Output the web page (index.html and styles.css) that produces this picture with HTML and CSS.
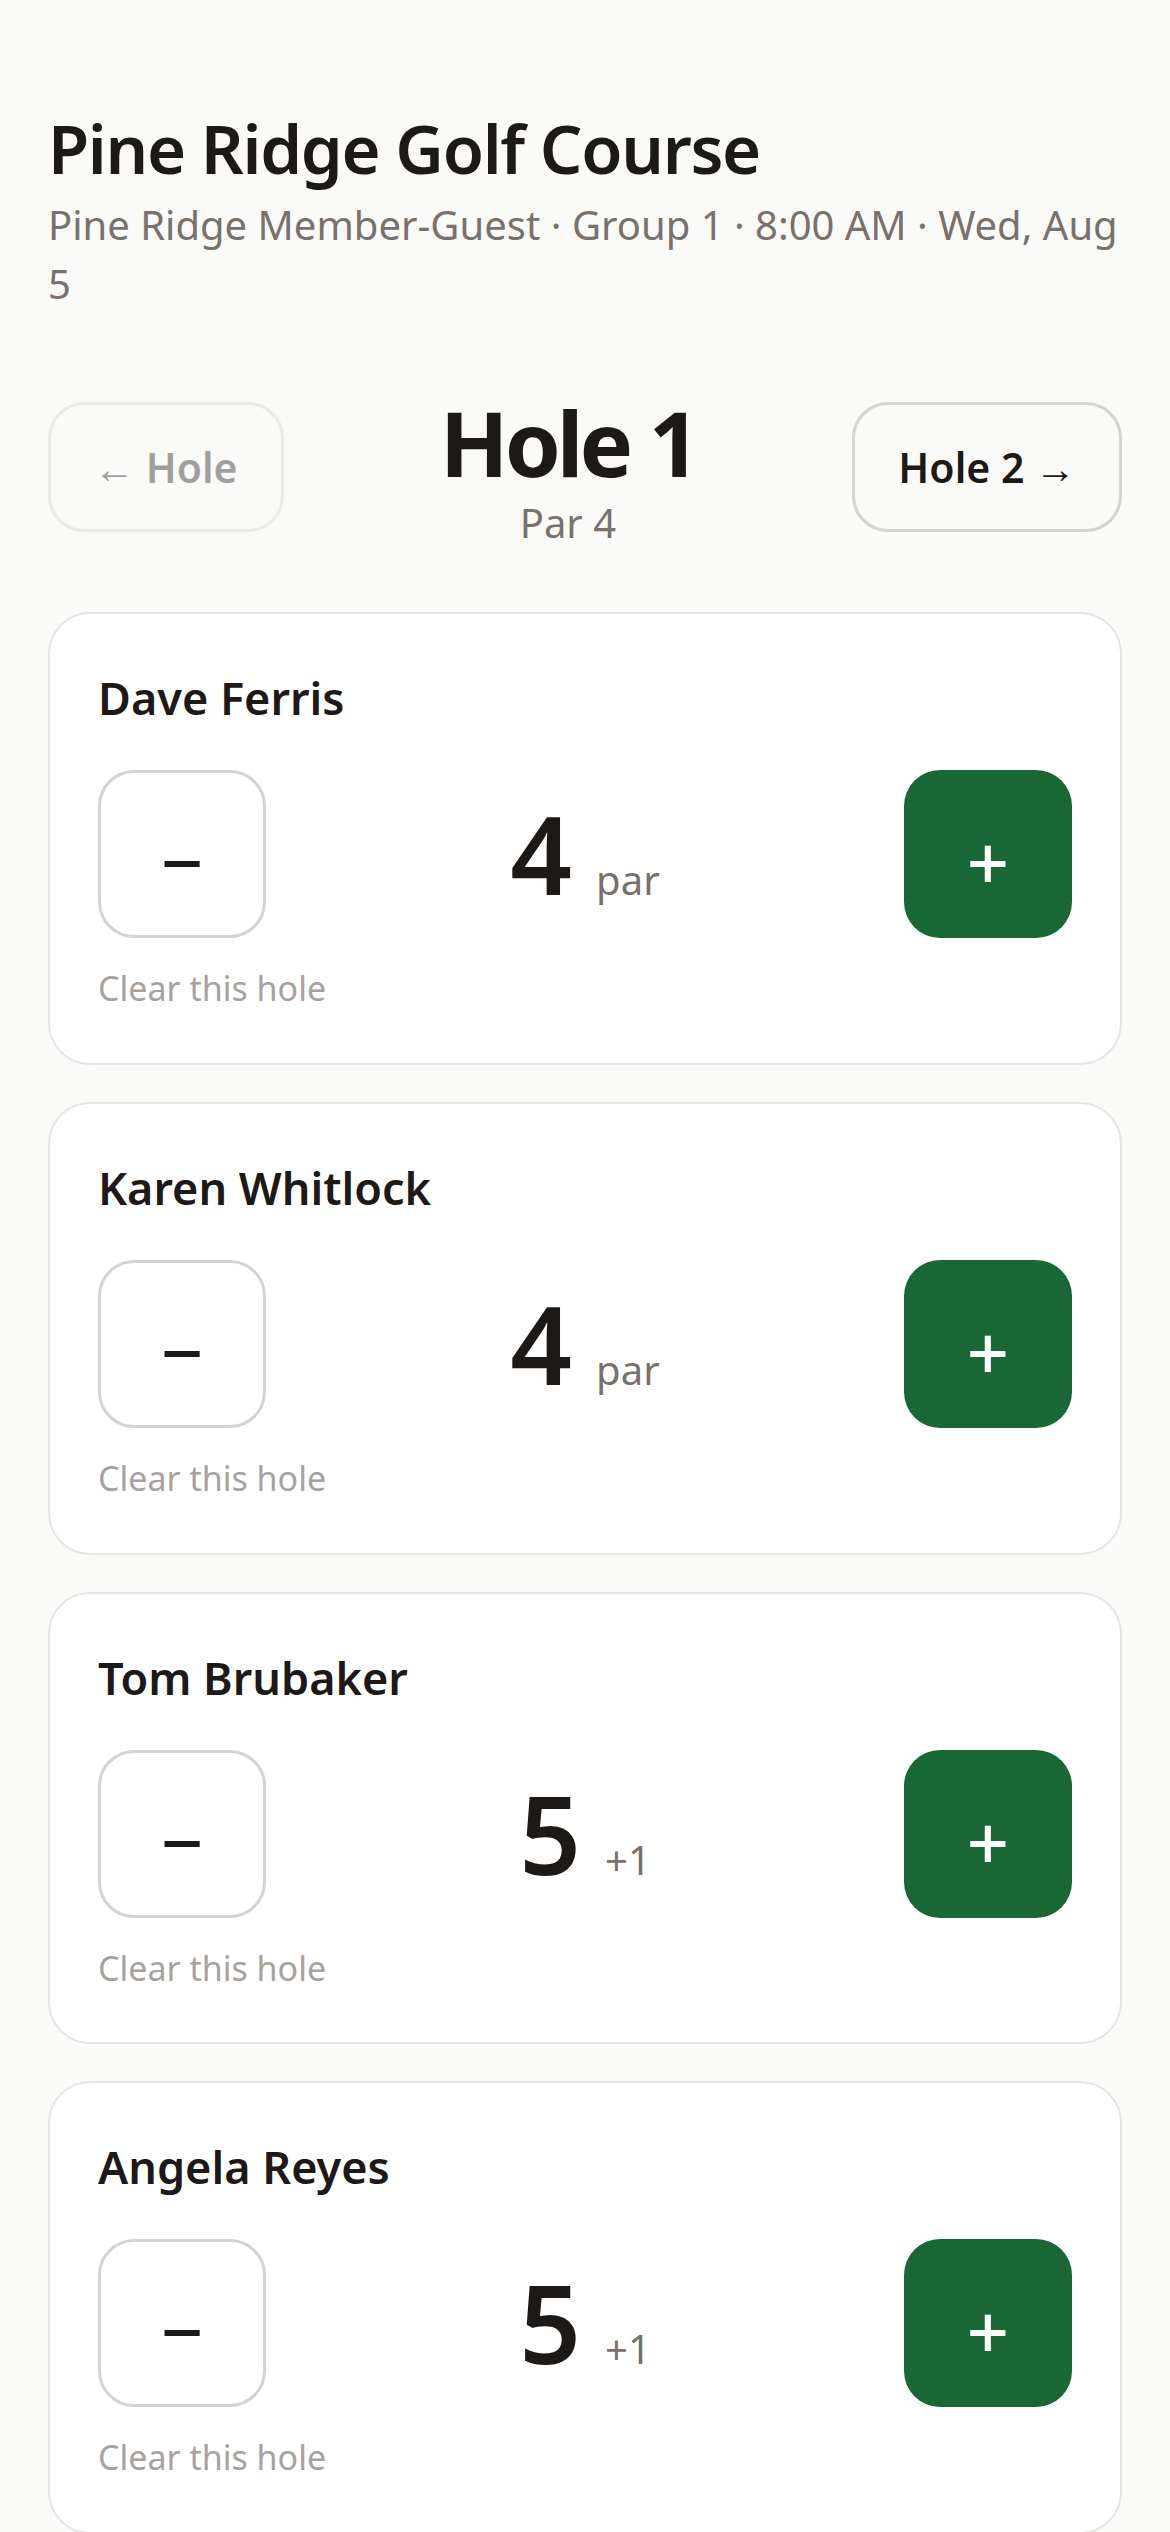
FILE: index.html
```html
<!DOCTYPE html>
<html lang="en">
<head>
  <meta charset="UTF-8">
  <meta name="viewport" content="width=device-width, initial-scale=1.0">
  <title>Pine Ridge Golf Course - Scorecard</title>
  <link rel="stylesheet" href="styles.css">
</head>
<body>

  <main class="page">
    <header class="course">
      <h1 class="course-name">Pine Ridge Golf Course</h1>
      <p class="round-info">Pine Ridge Member-Guest · Group 1 · 8:00 AM · Wed, Aug 5</p>
    </header>

    <nav class="hole-nav">
      <button type="button" class="nav-btn" disabled>← Hole</button>
      <div class="hole-title">
        <h2>Hole 1</h2>
        <p>Par 4</p>
      </div>
      <button type="button" class="nav-btn">Hole 2 →</button>
    </nav>

    <section class="players">
      <div class="player-card">
        <h3 class="player-name">Dave Ferris</h3>
        <div class="score-row">
          <button type="button" class="step-btn minus">−</button>
          <div class="score">
            <span class="strokes">4</span>
            <span class="to-par">par</span>
          </div>
          <button type="button" class="step-btn plus">+</button>
        </div>
        <button type="button" class="clear-link">Clear this hole</button>
      </div>

      <div class="player-card">
        <h3 class="player-name">Karen Whitlock</h3>
        <div class="score-row">
          <button type="button" class="step-btn minus">−</button>
          <div class="score">
            <span class="strokes">4</span>
            <span class="to-par">par</span>
          </div>
          <button type="button" class="step-btn plus">+</button>
        </div>
        <button type="button" class="clear-link">Clear this hole</button>
      </div>

      <div class="player-card">
        <h3 class="player-name">Tom Brubaker</h3>
        <div class="score-row">
          <button type="button" class="step-btn minus">−</button>
          <div class="score">
            <span class="strokes">5</span>
            <span class="to-par">+1</span>
          </div>
          <button type="button" class="step-btn plus">+</button>
        </div>
        <button type="button" class="clear-link">Clear this hole</button>
      </div>

      <div class="player-card">
        <h3 class="player-name">Angela Reyes</h3>
        <div class="score-row">
          <button type="button" class="step-btn minus">−</button>
          <div class="score">
            <span class="strokes">5</span>
            <span class="to-par">+1</span>
          </div>
          <button type="button" class="step-btn plus">+</button>
        </div>
        <button type="button" class="clear-link">Clear this hole</button>
      </div>
    </section>
  </main>

</body>
</html>
```

FILE: styles.css
```css
body {
  font-family: "Noto Sans", "Open Sans", sans-serif;
  background-color: #fafaf9;
  color: #1c1917;
  margin: 0;
}
.page {
  padding: 108px 48px 48px;
}
.course-name {
  font-size: 67px;
  font-weight: 600;
  line-height: 1.2;
  letter-spacing: -0.02em;
  margin: 0;
}
.round-info {
  font-size: 40px;
  line-height: 1.46;
  color: #78716c;
  margin: 8px 0 0;
}
.hole-nav {
  display: flex;
  align-items: center;
  gap: 24px;
  margin-top: 74px;
}
.nav-btn {
  height: 130px;
  padding: 0 43px;
  font-family: inherit;
  font-size: 41px;
  font-weight: 600;
  color: #1c1917;
  background: transparent;
  border: 3px solid #d6d3d1;
  border-radius: 36px;
  cursor: pointer;
}
.nav-btn:disabled {
  opacity: 0.4;
  cursor: default;
}
.hole-title {
  flex: 1;
  padding-top: 10px;
  text-align: center;
}
.hole-title h2 {
  font-size: 90px;
  font-weight: 700;
  line-height: 90px;
  letter-spacing: -0.045em;
  margin: 0;
}
.hole-title p {
  font-size: 40px;
  line-height: 48px;
  color: #78716c;
  margin: 12px 0 0;
}
.players {
  display: flex;
  flex-direction: column;
  gap: 37px;
  margin-top: 65px;
}
.player-card {
  background-color: white;
  border: 2px solid #e7e5e4;
  border-radius: 42px;
  padding: 48px;
}
.player-name {
  font-size: 45px;
  font-weight: 600;
  line-height: 72px;
  margin: 0;
}
.score-row {
  display: flex;
  justify-content: space-between;
  align-items: center;
  margin-top: 36px;
}
.step-btn {
  width: 168px;
  height: 168px;
  padding: 16px 0 0;
  font-family: inherit;
  font-size: 74px;
  font-weight: 500;
  line-height: 1;
  border-radius: 36px;
  cursor: pointer;
}
.minus {
  background: white;
  color: #1c1917;
  border: 3px solid #d6d3d1;
}
.plus {
  background-color: #196735;
  color: white;
  border: none;
}
.score {
  display: flex;
  align-items: baseline;
  gap: 24px;
}
.strokes {
  font-size: 108px;
  font-weight: 600;
  line-height: 1;
}
.to-par {
  font-size: 40px;
  color: #78716c;
}
.clear-link {
  display: block;
  margin-top: 24px;
  padding: 0;
  background: none;
  border: none;
  font-family: inherit;
  font-size: 34px;
  line-height: 1.55;
  color: #a8a29e;
  cursor: pointer;
}
```
